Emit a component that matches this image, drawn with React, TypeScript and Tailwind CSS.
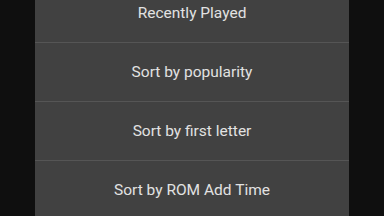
import React from "react";

const items = ["Recently Played", "Sort by popularity", "Sort by first letter", "Sort by ROM Add Time"];

export default function App() {
  return (
    <div className="w-[384px] h-[216px] overflow-hidden bg-[#0f0f0f] flex items-start" style={{ fontFamily: "Roboto, 'Liberation Sans', sans-serif" }}>
      <div className="ml-[35px] w-[314px] bg-[#414141] flex flex-col mt-[-16px] shrink-0">
        {items.map((t, i) => (
          <div
            key={t}
            className={`h-[59px] shrink-0 flex items-center justify-center pt-[1px] text-[15.5px] text-[#e2e2e2] ${i < items.length - 1 ? "border-b border-[#555555]" : ""}`}
          >
            {t}
          </div>
        ))}
      </div>
    </div>
  );
}
